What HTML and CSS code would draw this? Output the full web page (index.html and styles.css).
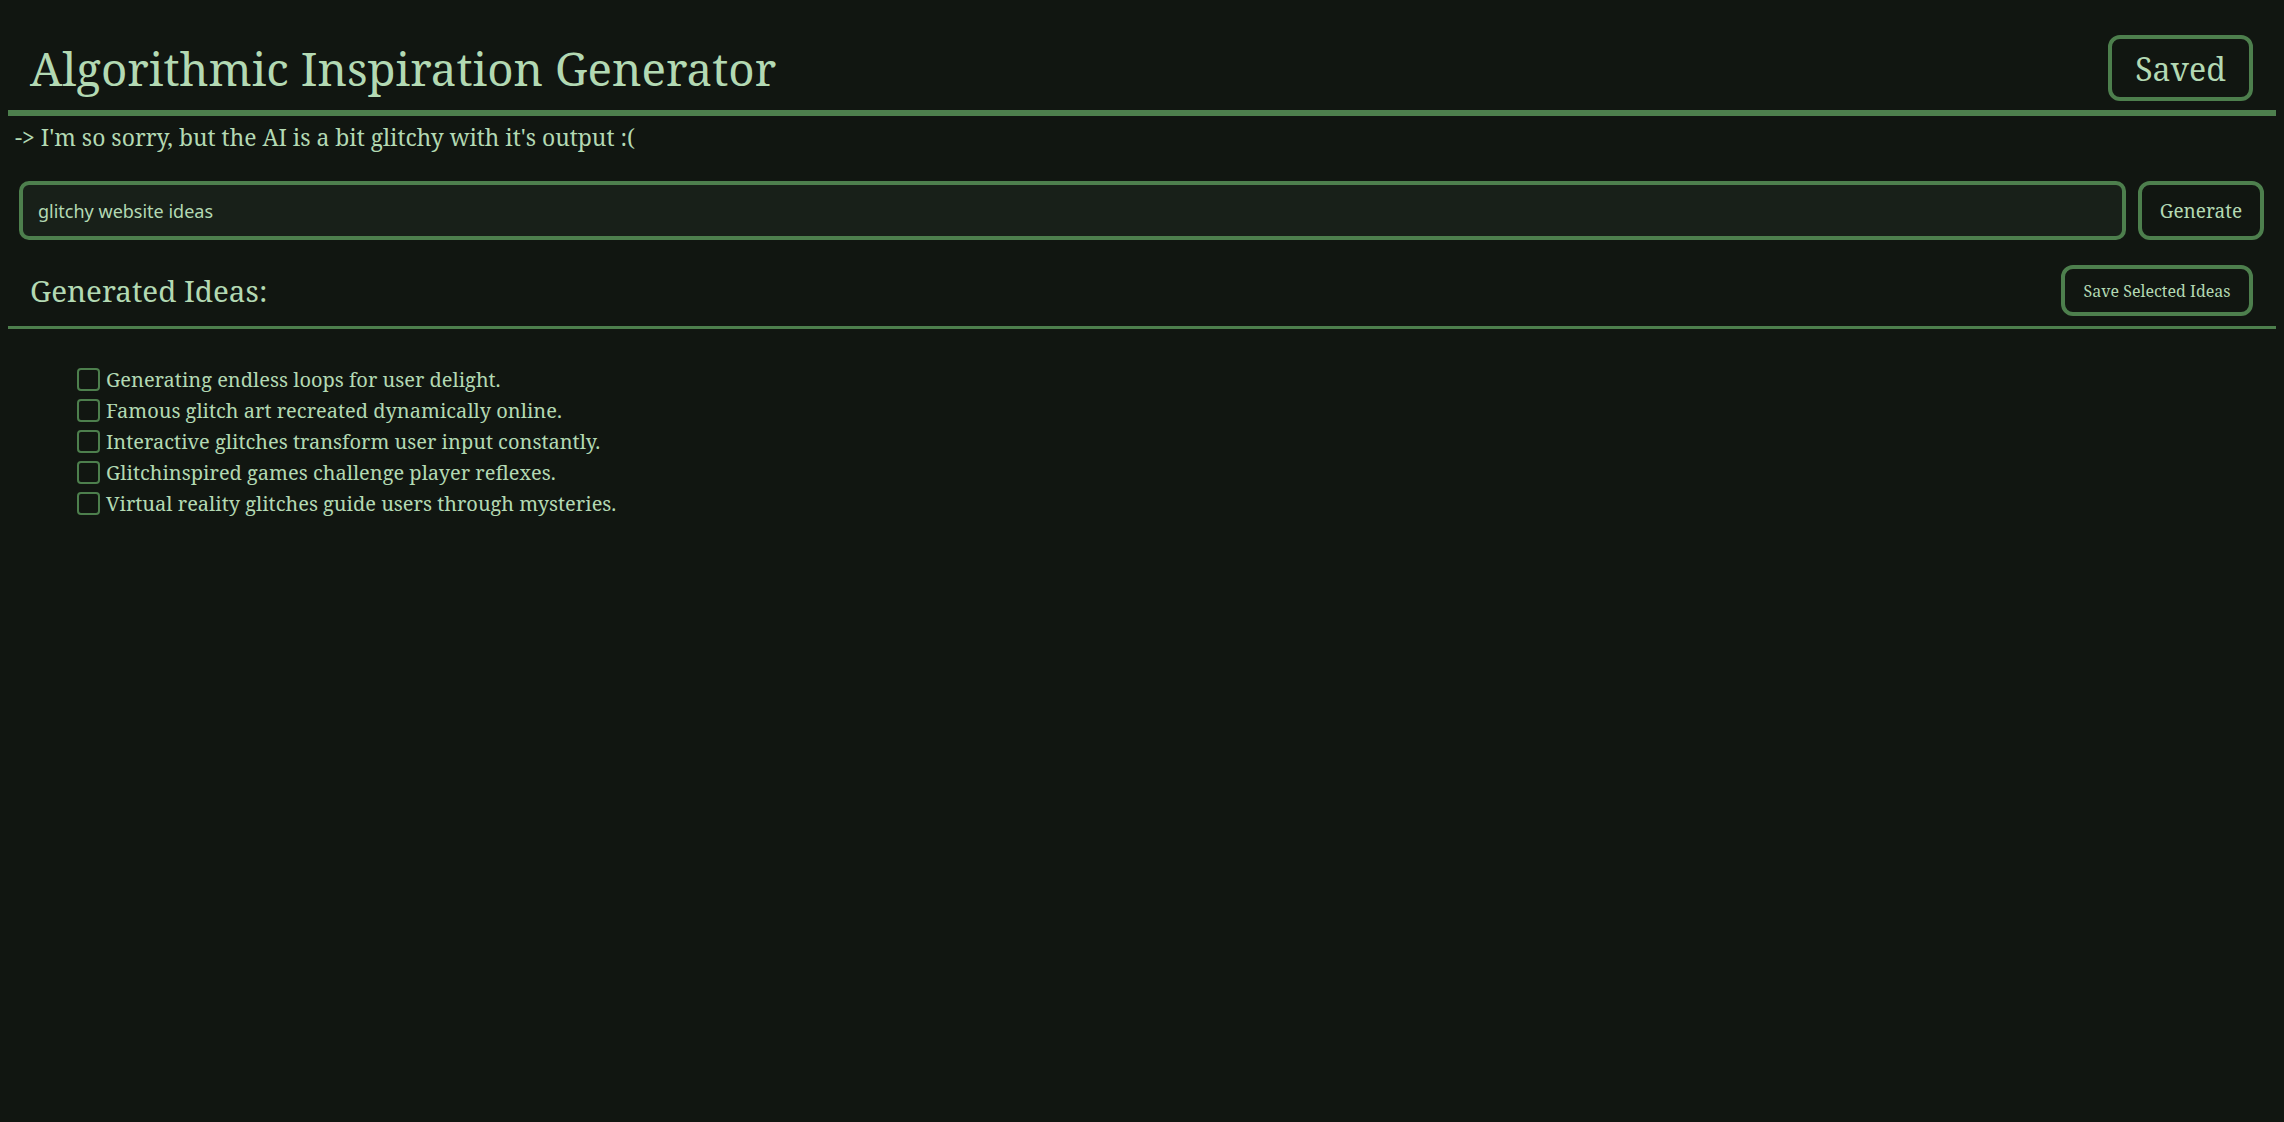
FILE: index.html
```html
<!DOCTYPE html>
<html lang="en">
<head>
<meta charset="utf-8">
<title>Algorithmic Inspiration Generator</title>
<link rel="stylesheet" href="styles.css">
</head>
<body>
<header class="top">
  <h1 class="title">Algorithmic Inspiration Generator</h1>
  <button class="btn btn-saved">Saved</button>
</header>
<p class="note">-&gt; I'm so sorry, but the AI is a bit glitchy with it's output :(</p>
<div class="gen-row">
  <input class="prompt" type="text" value="glitchy website ideas">
  <button class="btn btn-generate">Generate</button>
</div>
<div class="ideas-head">
  <h2 class="ideas-title">Generated Ideas:</h2>
  <button class="btn btn-save-sel">Save Selected Ideas</button>
</div>
<ul class="ideas">
  <li class="idea"><input class="check" type="checkbox"><span class="idea-text">Generating endless loops for user delight.</span></li>
  <li class="idea"><input class="check" type="checkbox"><span class="idea-text">Famous glitch art recreated dynamically online.</span></li>
  <li class="idea"><input class="check" type="checkbox"><span class="idea-text">Interactive glitches transform user input constantly.</span></li>
  <li class="idea"><input class="check" type="checkbox"><span class="idea-text">Glitchinspired games challenge player reflexes.</span></li>
  <li class="idea"><input class="check" type="checkbox"><span class="idea-text">Virtual reality glitches guide users through mysteries.</span></li>
</ul>
</body>
</html>
```
FILE: styles.css
```css
html, body {
  background: #111611;
}
body {
  margin: 8px;
  color: #b3d9b3;
  font-family: "Noto Serif", "DejaVu Serif", serif;
}
.top {
  display: flex;
  justify-content: space-between;
  align-items: center;
  padding: 27px 23px 9px 22px;
  border-bottom: 6px solid #4d7f4d;
}
.title {
  margin: 0;
  font-size: 45.7px;
  font-weight: normal;
}
.btn {
  background: #111611;
  color: #b3d9b3;
  border: 4px solid #4d7f4d;
  border-radius: 12px;
  font-family: "Noto Serif", "DejaVu Serif", serif;
  padding: 0;
  box-sizing: border-box;
}
.btn-saved {
  width: 145px;
  height: 66px;
  font-size: 32px;
}
.note {
  margin: 6px 7px 0;
  font-size: 22.9px;
}
.gen-row {
  display: flex;
  gap: 12px;
  padding: 0 12px 0 11px;
  margin-top: 28px;
}
.prompt {
  flex: 1;
  height: 59px;
  box-sizing: border-box;
  background: #182019;
  color: #b3d9b3;
  border: 4px solid #4d7f4d;
  border-radius: 10px;
  padding: 0 15px;
  font-family: "Noto Sans", "Open Sans", sans-serif;
  font-size: 18px;
  outline: none;
}
.btn-generate {
  width: 126px;
  height: 59px;
  font-size: 19px;
}
.ideas-head {
  display: flex;
  justify-content: space-between;
  align-items: center;
  margin-top: 15px;
  padding: 10px 23px 10px 22px;
  border-bottom: 3px solid #4d7f4d;
}
.ideas-title {
  margin: 0;
  font-size: 29.6px;
  font-weight: normal;
}
.btn-save-sel {
  width: 192px;
  height: 51px;
  font-size: 16px;
}
.ideas {
  list-style: none;
  margin: 35px 0 0;
  padding: 0 0 0 69px;
}
.idea {
  display: flex;
  align-items: center;
  height: 31px;
  font-size: 20px;
}
.check {
  appearance: none;
  -webkit-appearance: none;
  margin: 0 6px 0 0;
  width: 23px;
  height: 23px;
  box-sizing: border-box;
  border: 2px solid #4d7f4d;
  border-radius: 4px;
  background: #111611;
}
```
